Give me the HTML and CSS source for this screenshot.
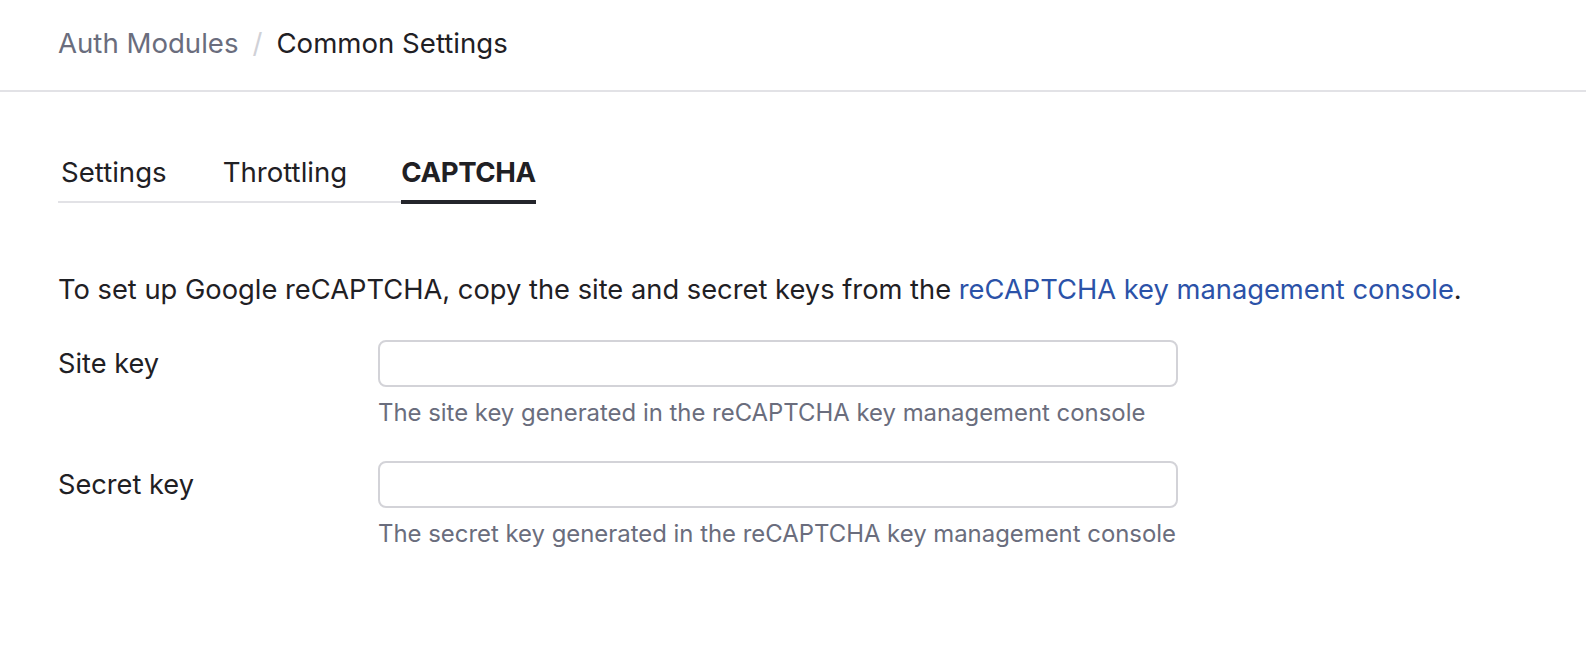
FILE: index.html
```html
<!DOCTYPE html>
<html>
<head>
<meta charset="utf-8">
<link rel="stylesheet" href="styles.css">
</head>
<body>
<header class="topbar">
  <nav class="crumbs">
    <span class="crumb-parent">Auth Modules</span>
    <span class="crumb-sep">/</span>
    <span class="crumb-current">Common Settings</span>
  </nav>
</header>
<main class="content">
  <div class="tabs">
    <div class="tab">Settings</div>
    <div class="tab">Throttling</div>
    <div class="tab tab-active">CAPTCHA</div>
  </div>
  <p class="intro">To set up Google reCAPTCHA, copy the site and secret keys from the <a class="link" href="#">reCAPTCHA key management console</a>.</p>
  <div class="field">
    <label class="field-label">Site key</label>
    <div class="field-control">
      <input class="text-input" type="text">
      <div class="help">The site key generated in the reCAPTCHA key management console</div>
    </div>
  </div>
  <div class="field">
    <label class="field-label">Secret key</label>
    <div class="field-control">
      <input class="text-input" type="text">
      <div class="help">The secret key generated in the reCAPTCHA key management console</div>
    </div>
  </div>
</main>
</body>
</html>
```
FILE: styles.css
```css
* { box-sizing: border-box; }
html, body { margin: 0; padding: 0; background: #fff; }
body {
  font-family: Inter, "Noto Sans", sans-serif;
  color: #1f2024;
  -webkit-font-smoothing: antialiased;
}
.topbar {
  height: 92px;
  border-bottom: 2px solid #e2e2e6;
  display: flex;
  align-items: center;
  padding: 0 58px 4px;
}
.crumbs {
  display: flex;
  align-items: center;
  font-size: 27.6px;
}
.crumb-parent { color: #6a6d7d; }
.crumb-sep { color: #d0d1d7; margin: 0 14px 0 14px; }
.crumb-current { color: #1f2024; }
.content { padding: 64px 58px 0; }
.tabs {
  display: inline-flex;
  border-bottom: 2px solid #e2e2e6;
  padding-left: 3px;
}
.tab {
  font-size: 27.6px;
  line-height: 32px;
  padding-bottom: 12px;
  color: #1f2024;
  margin: 0 56px -3px 0;
  border-bottom: 4px solid transparent;
}
.tab:nth-child(2) { margin-right: 54px; }
.tab-active {
  margin-right: 0;
  font-weight: 700;
  letter-spacing: -0.4px;
  border-bottom-color: #24252b;
}
.intro {
  font-size: 27.3px;
  line-height: 36px;
  margin: 69px 0 32px;
}
.link { color: #2b52a8; text-decoration: none; }
.field {
  display: flex;
  align-items: flex-start;
  margin-bottom: 33px;
}
.field-label {
  width: 320px;
  flex: none;
  font-size: 27.2px;
  line-height: 47px;
}
.field-control { display: flex; flex-direction: column; }
.text-input {
  width: 800px;
  height: 47px;
  border: 2px solid #d3d3d8;
  border-radius: 8px;
  font: inherit;
  font-size: 24px;
  padding: 0 12px;
  outline: none;
}
.help {
  font-size: 23.9px;
  line-height: 30px;
  color: #6a6d7d;
  margin-top: 11px;
}
```
